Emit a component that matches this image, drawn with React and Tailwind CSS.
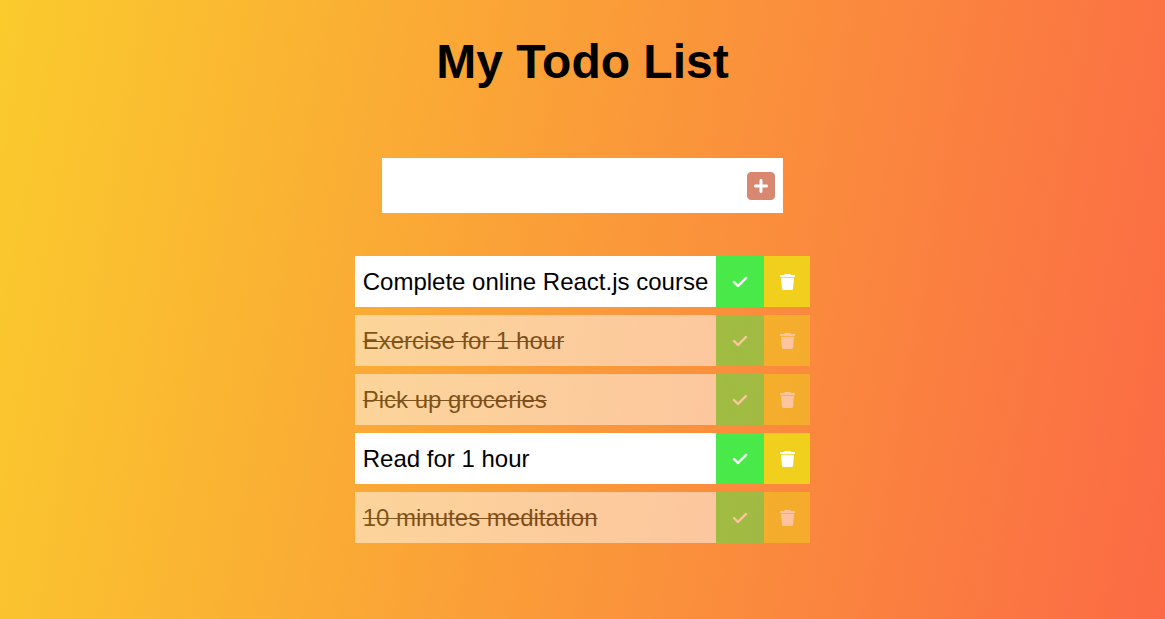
import { useState } from "react";

function PlusIcon() {
  return (
    <svg viewBox="0 0 448 512" fill="currentColor" className="h-8 w-7" aria-hidden="true">
      <path d="M384 32C419.3 32 448 60.65 448 96V416C448 451.3 419.3 480 384 480H64C28.65 480 0 451.3 0 416V96C0 60.65 28.65 32 64 32H384zM224 368C237.3 368 248 357.3 248 344V280H312C325.3 280 336 269.3 336 256C336 242.7 325.3 232 312 232H248V168C248 154.7 237.3 144 224 144C210.7 144 200 154.7 200 168V232H136C122.7 232 112 242.7 112 256C112 269.3 122.7 280 136 280H200V344C200 357.3 210.7 368 224 368z" />
    </svg>
  );
}

function CheckIcon() {
  return (
    <svg viewBox="-32 0 512 512" fill="currentColor" className="size-4" aria-hidden="true">
      <path
        stroke="currentColor"
        strokeWidth="14"
        d="M438.6 105.4C451.1 117.9 451.1 138.1 438.6 150.6L182.6 406.6C170.1 419.1 149.9 419.1 137.4 406.6L9.372 278.6C-3.124 266.1-3.124 245.9 9.372 233.4C21.87 220.9 42.13 220.9 54.63 233.4L159.1 338.7L393.4 105.4C405.9 92.88 426.1 92.88 438.6 105.4z"
      />
    </svg>
  );
}

function TrashIcon() {
  return (
    <svg viewBox="-16 0 480 512" fill="currentColor" className="h-4 w-[15px]" aria-hidden="true">
      <path d="M46 474c2 22 20 38 42 38h272c22 0 40-16 42-38L432 122H16L46 474zM448 32H330l-12-23c-3-6-8-9-14-9H144c-6 0-11 3-14 9L118 32H0c-9 0-16 7-16 16v32c0 9 7 16 16 16h448c9 0 16-7 16-16V48c0-9-7-16-16-16z" />
    </svg>
  );
}

const initialTodos = [
  { id: 1, text: "Complete online React.js course", done: false },
  { id: 2, text: "Exercise for 1 hour", done: true },
  { id: 3, text: "Pick up groceries", done: true },
  { id: 4, text: "Read for 1 hour", done: false },
  { id: 5, text: "10 minutes meditation", done: true },
];

export default function App() {
  const [todos, setTodos] = useState(initialTodos);
  const [text, setText] = useState("");

  const add = (e) => {
    e.preventDefault();
    if (!text.trim()) return;
    setTodos([...todos, { id: Date.now(), text, done: false }]);
    setText("");
  };
  const toggle = (id) =>
    setTodos(todos.map((t) => (t.id === id ? { ...t, done: !t.done } : t)));
  const remove = (id) => setTodos(todos.filter((t) => t.id !== id));

  return (
    <div className="min-h-screen bg-[linear-gradient(100deg,#facb2d,#fb6a45)] font-['Liberation_Sans',Arial,sans-serif] text-2xl text-black">
      <header className="p-8 text-center">
        <h1 className="text-5xl leading-[60px] font-bold">My Todo List</h1>
      </header>
      <main className="flex flex-col items-center">
        <form onSubmit={add} className="mt-[34px] flex h-[55px] bg-white">
          <input
            type="text"
            aria-label="New todo"
            value={text}
            onChange={(e) => setText(e.target.value)}
            className="w-[357px] px-2 outline-none"
          />
          <button type="submit" aria-label="Add todo" className="px-2 text-[#d88771]">
            <PlusIcon />
          </button>
        </form>
        <ul className="mt-[43px] flex flex-col gap-2">
          {todos.map((t) => (
            <li key={t.id} className={t.done ? "flex h-[51px] opacity-50" : "flex h-[51px]"}>
              <span className="flex grow items-center bg-white px-2">
                <span className={t.done ? "line-through decoration-1" : ""}>{t.text}</span>
              </span>
              <button
                type="button"
                aria-label={"Complete " + t.text}
                onClick={() => toggle(t.id)}
                className="flex w-12 items-center justify-center bg-[#49e949] text-white"
              >
                <CheckIcon />
              </button>
              <button
                type="button"
                aria-label={"Delete " + t.text}
                onClick={() => remove(t.id)}
                className="flex w-[46px] items-center justify-center bg-[#f0d01c] text-white"
              >
                <TrashIcon />
              </button>
            </li>
          ))}
        </ul>
      </main>
    </div>
  );
}
